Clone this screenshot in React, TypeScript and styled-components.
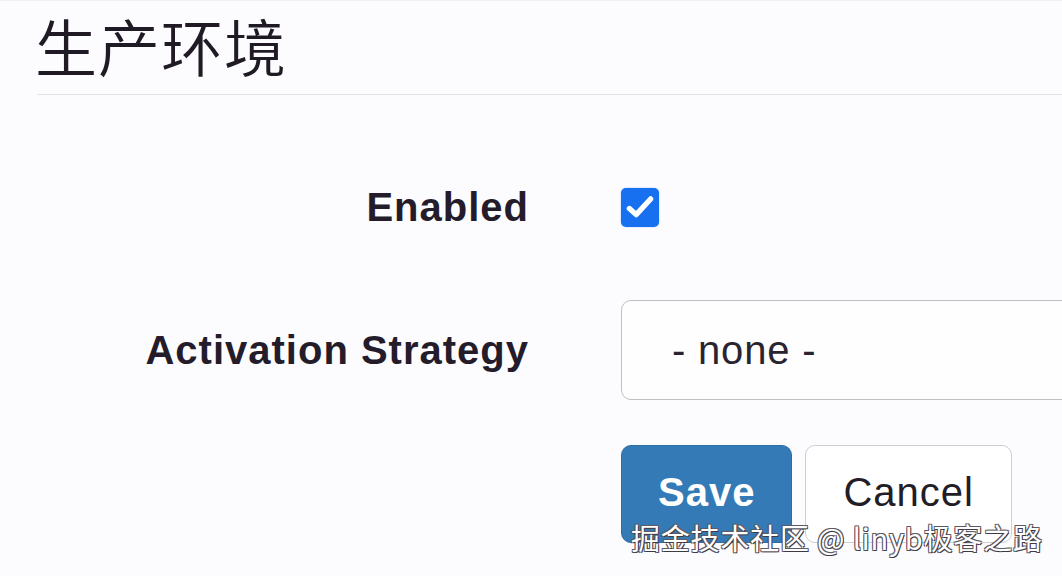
import React from "react";
import styled, { createGlobalStyle } from "styled-components";

const Global = createGlobalStyle`
  html, body {
    margin: 0;
    padding: 0;
    background: #fcfcfe;
    overflow: hidden;
  }
  body {
    font-family: "Liberation Sans", Arial, "Noto Sans CJK SC", sans-serif;
    color: #241e29;
  }
`;

const Page = styled.div`
  position: relative;
  width: 1062px;
  height: 576px;
  overflow: hidden;
  background: #fcfcfe;
  border-top: 1px solid #eef0f3;
  box-sizing: border-box;
`;

const Header = styled.div`
  margin-left: 37px;
  padding: 13px 0 18px;
  border-bottom: 1px solid #e2e4e8;
`;

const Title = styled.h1`
  margin: 0;
  font-family: "Noto Sans CJK SC", "Noto Sans", sans-serif;
  font-weight: 350;
  font-size: 62px;
  line-height: 62px;
  letter-spacing: 1px;
  margin-left: -2px;
  color: #1f1a24;
`;

const Form = styled.form`
  display: flex;
  flex-direction: column;
  padding-top: 92px;
`;

const Row = styled.div<{ $gap?: number }>`
  display: flex;
  align-items: center;
  column-gap: 92px;
  margin-bottom: ${(p) => p.$gap ?? 0}px;
`;

const Label = styled.label`
  width: 529px;
  flex: none;
  text-align: right;
  font-weight: 700;
  font-size: 40px;
  letter-spacing: 1px;
  line-height: 1;
  color: #241c2a;
`;

const Spacer = styled.div`
  width: 529px;
  flex: none;
`;

const Check = styled.span`
  width: 38px;
  height: 39px;
  border-radius: 5px;
  background: #1670f0;
  display: flex;
  align-items: center;
  justify-content: center;
  box-shadow: 0 0 2px rgba(22, 112, 240, 0.4);
`;

const Select = styled.div`
  width: 600px;
  height: 100px;
  flex: none;
  box-sizing: border-box;
  border: 1px solid #bfbfc4;
  border-radius: 10px;
  background: #fefefe;
  display: flex;
  align-items: center;
  padding-left: 50px;
  font-size: 40px;
  letter-spacing: 0.8px;
  color: #2a2430;
`;

const Buttons = styled.div`
  display: flex;
  gap: 13px;
`;

const Button = styled.button<{ $primary?: boolean }>`
  height: 98px;
  box-sizing: border-box;
  padding: 0 ${(p) => (p.$primary ? 36 : 37)}px 4px;
  border-radius: 10px;
  border: 1px solid ${(p) => (p.$primary ? "#2e6da4" : "#cfcfd3")};
  background: ${(p) => (p.$primary ? "#337ab7" : "#ffffff")};
  color: ${(p) => (p.$primary ? "#ffffff" : "#221d27")};
  font-family: "Liberation Sans", Arial, sans-serif;
  font-weight: ${(p) => (p.$primary ? 700 : 400)};
  font-size: 40px;
  letter-spacing: 1px;
`;

const Watermark = styled.div`
  position: absolute;
  left: 631px;
  top: 518px;
  font-family: "Noto Sans CJK SC", "Noto Sans", sans-serif;
  font-size: 29px;
  line-height: 36px;
  letter-spacing: 0.8px;
  color: #ffffff;
  white-space: nowrap;
  text-shadow: 1px 1px 0 #3e3a44, -1px -1px 0 #5e5a64, 1px -1px 0 #5e5a64,
    -1px 1px 0 #5e5a64;
`;

export default function App() {
  return (
    <>
      <Global />
      <Page>
        <Header>
          <Title>生产环境</Title>
        </Header>
        <Form>
          <Row $gap={73}>
            <Label>Enabled</Label>
            <Check>
              <svg width="34" height="34" viewBox="0 0 16 16">
                <path
                  d="M3 8.7 L6.2 11.6 L13 4.2"
                  fill="none"
                  stroke="#fff"
                  strokeWidth="2.5"
                  strokeLinecap="round"
                  strokeLinejoin="round"
                />
              </svg>
            </Check>
          </Row>
          <Row $gap={45}>
            <Label>Activation Strategy</Label>
            <Select>- none -</Select>
          </Row>
          <Row>
            <Spacer />
            <Buttons>
              <Button $primary type="button">Save</Button>
              <Button type="button">Cancel</Button>
            </Buttons>
          </Row>
        </Form>
        <Watermark>掘金技术社区 @ linyb极客之路</Watermark>
      </Page>
    </>
  );
}
